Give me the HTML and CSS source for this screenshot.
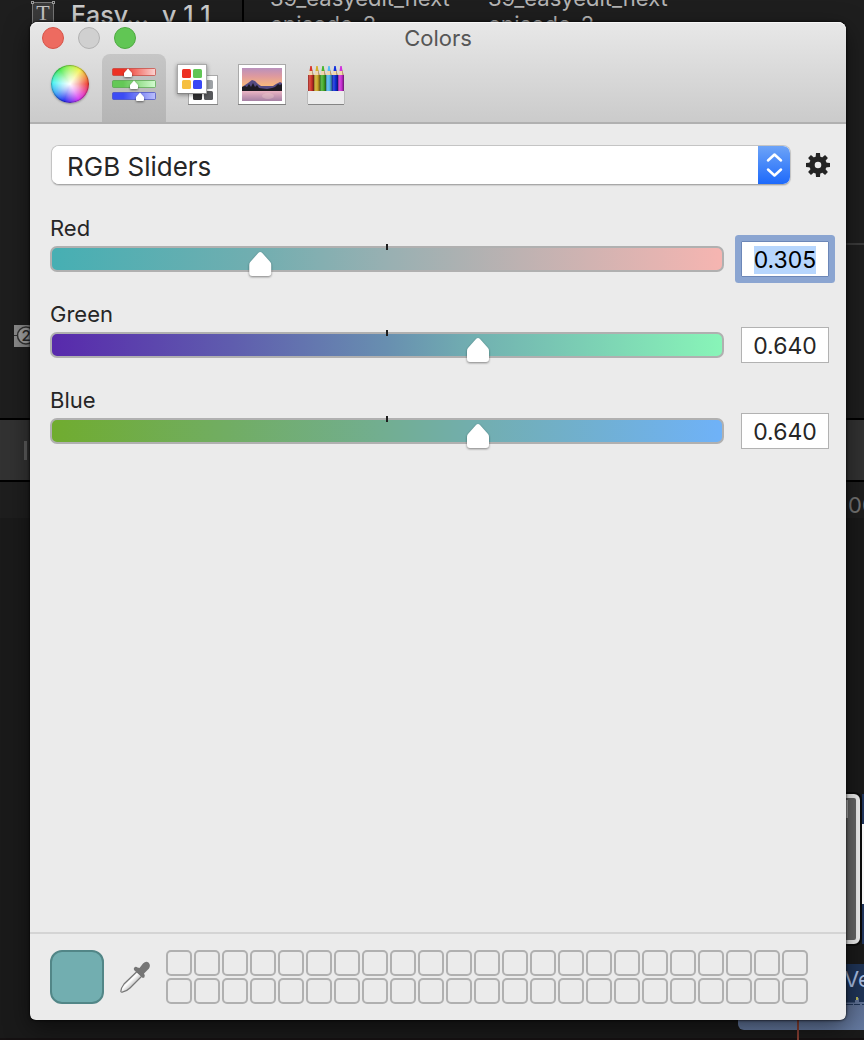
FILE: index.html
```html
<!DOCTYPE html>
<html lang="en">
<head>
<meta charset="utf-8">
<title>Colors</title>
<link rel="stylesheet" href="styles.css">
</head>
<body>
<div class="desktop">
  <div class="editor" aria-hidden="true">
    <svg class="title-icon" width="24" height="24" viewBox="0 0 24 24"><rect x="1.500" y="2.500" width="21" height="21" fill="#3a3a3a" stroke="#777"/><g fill="#1e1e1e" stroke="#999"><rect x=".5" y="1.500" width="2" height="2"/><rect x="21.500" y="1.500" width="2" height="2"/></g><text x="12" y="20" text-anchor="middle" class="title-icon-letter">T</text></svg>
    <div class="preset-name">Easy… &nbsp;v 1 1</div>
    <div class="pane-divider"></div>
    <div class="clip-name clip-name-a">39_easyedit_next<br>episode_2</div>
    <div class="clip-name clip-name-b">39_easyedit_next<br>episode_2</div>
    <div class="inspector-rule"></div>
    <svg class="badge-two" width="24" height="22" viewBox="0 0 24 22"><rect width="24" height="22" fill="#8b8b8b"/><path d="M0 10.500h24" stroke="#333"/><circle cx="12" cy="10.500" r="8.500" fill="#a0a0a0" stroke="#333" stroke-width="1.500"/><text x="12" y="16" text-anchor="middle" class="badge-digit">2</text></svg>
    <div class="timeline-bar"></div>
    <div class="timeline-grip"></div>
    <div class="timecode">00</div>
    <div class="timeline-tracks"></div>
    <div class="gap-clip"></div>
    <div class="gap-clip-mark"></div>
    <div class="next-clip"></div>
    <div class="audio-clip"><div class="audio-label">Ve</div></div>
    <svg class="waveform" width="18" height="12" viewBox="0 0 18 12"><path d="M0 9h9v-4h3v-2h1v4h5v5H0z" fill="#5e7094"/><path d="M0 9.500h7M8 9.500h6M16 9.500h2" stroke="#1f3457"/><path d="M10 2h2v3h-2z" fill="#b6b65a"/></svg>
    <div class="playhead"></div>
  </div>

  <main class="window">
    <header class="header">
      <div class="titlebar">
        <div class="lights">
          <button class="light light-close" aria-label="Close"></button>
          <button class="light light-min" aria-label="Minimize"></button>
          <button class="light light-zoom" aria-label="Zoom"></button>
        </div>
        <h1 class="title">Colors</h1>
      </div>
      <nav class="toolbar" aria-label="Color modes">
        <button class="tool" aria-label="Color Wheel"><span class="wheel"></span></button>
        <button class="tool tool-active" aria-label="Color Sliders" aria-pressed="true">
          <svg width="64" height="68" viewBox="0 0 64 68">
            <defs>
              <linearGradient id="r"><stop offset=".25" stop-color="#ed3124"/><stop offset="1" stop-color="#fbd5d3"/></linearGradient>
              <linearGradient id="g"><stop offset=".25" stop-color="#64c857"/><stop offset="1" stop-color="#d3fbd0"/></linearGradient>
              <linearGradient id="b"><stop offset=".25" stop-color="#3c4cf4"/><stop offset="1" stop-color="#bcc0fb"/></linearGradient>
            </defs>
            <rect x="10.500" y="14.500" width="43" height="7" rx="1" fill="url(#r)" stroke="#c53930" stroke-opacity=".65"/>
            <rect x="10.500" y="26.500" width="43" height="7" rx="1" fill="url(#g)" stroke="#4ca343" stroke-opacity=".65"/>
            <rect x="10.500" y="38.500" width="43" height="7" rx="1" fill="url(#b)" stroke="#3a43c4" stroke-opacity=".65"/>
            <g class="mini-thumbs" fill="#fff">
              <path d="M26 14.500l4 4.500v3q0 1-1 1h-6q-1 0-1-1v-3z"/>
              <path d="M32 26.500l4 4.500v3q0 1-1 1h-6q-1 0-1-1v-3z"/>
              <path d="M38 38.500l4 4.500v3q0 1-1 1h-6q-1 0-1-1v-3z"/>
            </g>
          </svg>
        </button>
        <button class="tool" aria-label="Color Palettes">
          <svg width="64" height="68" viewBox="0 0 64 68">
            <rect x="22.500" y="21.500" width="29" height="29" fill="#fff" stroke="#a9a9a9"/><path d="M22 50.500h30" stroke="#858585"/>
            <rect x="38" y="26" width="9" height="9" rx="1.500" fill="#9fa3a7"/><rect x="27" y="37" width="9" height="9" rx="1.500" fill="#303032"/><rect x="38" y="37" width="9" height="9" rx="1.500" fill="#58595c"/>
            <g class="card-shadow"><rect x="11.500" y="10.500" width="29" height="29" fill="#fff" stroke="#a9a9a9"/><path d="M11 39.500h30" stroke="#858585"/></g>
            <rect x="16" y="15" width="9" height="9" rx="1.500" fill="#ed3123"/><rect x="27" y="15" width="9" height="9" rx="1.500" fill="#62c655"/><rect x="16" y="26" width="9" height="9" rx="1.500" fill="#f6bf40"/><rect x="27" y="26" width="9" height="9" rx="1.500" fill="#3948f5"/>
          </svg>
        </button>
        <button class="tool" aria-label="Image Palettes">
          <svg width="64" height="68" viewBox="0 0 64 68">
            <defs>
              <linearGradient id="sky" x2="0" y2="1"><stop stop-color="#b991bd"/><stop offset=".35" stop-color="#dd999f"/><stop offset=".75" stop-color="#f6b57d"/><stop offset="1" stop-color="#fbd58e"/></linearGradient>
              <linearGradient id="lake" x2="0" y2="1"><stop stop-color="#ecb5c4"/><stop offset="1" stop-color="#a580a4"/></linearGradient>
            </defs>
            <rect x="8.500" y="10.500" width="47" height="40" fill="#fff" stroke="#a9a9a9"/><path d="M8 50.500h48" stroke="#808080"/>
            <rect x="12" y="14" width="40" height="23" fill="url(#sky)"/>
            <rect x="12" y="37" width="40" height="10" fill="url(#lake)"/>
            <path d="M12 33l3-2 3-2 4-3 3 1 3 3 3 2h12l3-2 4-2 2 1v8H12z" fill="#554b82"/>
            <path d="M12 33l3-1 2 1 2-3 2 3 2-4 2 4 2-2 2 3 8 1 5-1 3-1 3-3 2 1 2-1v7H12z" fill="#1d1a22"/>
            <ellipse cx="38" cy="42" rx="6" ry="3" fill="#f2d0cf" opacity=".35"/>
          </svg>
        </button>
        <button class="tool" aria-label="Pencils">
          <svg width="64" height="68" viewBox="0 0 64 68">
            <defs>
              <linearGradient id="round"><stop stop-color="#000" stop-opacity=".35"/><stop offset=".35" stop-color="#fff" stop-opacity=".15"/><stop offset=".6" stop-color="#000" stop-opacity=".05"/><stop offset="1" stop-color="#000" stop-opacity=".5"/></linearGradient>
              <g id="pencil"><path d="M.2 21.500L1.700 16h2.600l1.500 5.500z" fill="#f1d6ae"/><path d="M3.800 16h.5l1.500 5.500H4.500z" fill="#b08c62"/><path d="M1.500 17L2.300 12h1.400l.8 5z"/><rect y="21" width="6" height="16"/><rect y="21" width="6" height="16" fill="url(#round)"/></g>
            </defs>
            <use href="#pencil" x="14" fill="#d8352b"/><use href="#pencil" x="20" fill="#d4b02a"/><use href="#pencil" x="26" fill="#48b52c"/><use href="#pencil" x="32" fill="#54bdf5"/><use href="#pencil" x="38" fill="#0f2fe0"/><use href="#pencil" x="44" fill="#d02fdc"/>
            <rect x="13.500" y="37" width="37" height="13" fill="#ebebeb"/><path d="M13.500 37v13M50.500 37v13" stroke="#bbb"/><path d="M14 50.500h36" stroke="#858585"/>
          </svg>
        </button>
      </nav>
    </header>

    <section class="content">
      <div class="mode-row">
        <div class="mode">
          <select class="mode-select" aria-label="Slider type">
            <option>RGB Sliders</option>
            <option>Grayscale Slider</option>
            <option>CMYK Sliders</option>
            <option>HSB Sliders</option>
          </select>
          <span class="mode-arrows"><svg width="33" height="40" viewBox="0 0 33 40" fill="none" stroke="#fff" stroke-width="2.500" stroke-linecap="round" stroke-linejoin="round"><path d="M10 15.500l6.500-6 6.500 6M10 24.500l6.500 6 6.500-6"/></svg></span>
        </div>
        <button class="gear" aria-label="Options">
          <svg width="24" height="24" viewBox="-12 -12 24 24" fill="#232323">
            <defs><path id="tooth" d="M-2.400-7l.4-5h4l.4 5z"/></defs>
            <circle r="6" fill="none" stroke="#232323" stroke-width="5.400"/>
            <use href="#tooth"/><use href="#tooth" transform="rotate(45)"/><use href="#tooth" transform="rotate(90)"/><use href="#tooth" transform="rotate(135)"/><use href="#tooth" transform="rotate(180)"/><use href="#tooth" transform="rotate(225)"/><use href="#tooth" transform="rotate(270)"/><use href="#tooth" transform="rotate(315)"/>
          </svg>
        </button>
      </div>

      <div class="channels">
        <div class="channel">
          <label class="channel-label" for="red">Red</label>
          <div class="track track-red"><input class="slider" id="red" type="range" min="0" max="1" step="0.005" value="0.305"></div>
          <input class="field" id="red-value" type="text" value="0.305" aria-label="Red value">
        </div>
        <div class="channel">
          <label class="channel-label" for="green">Green</label>
          <div class="track track-green"><input class="slider" id="green" type="range" min="0" max="1" step="0.005" value="0.64"></div>
          <input class="field" type="text" value="0.640" aria-label="Green value">
        </div>
        <div class="channel">
          <label class="channel-label" for="blue">Blue</label>
          <div class="track track-blue"><input class="slider" id="blue" type="range" min="0" max="1" step="0.005" value="0.64"></div>
          <input class="field" type="text" value="0.640" aria-label="Blue value">
        </div>
      </div>
    </section>

    <footer class="footer">
      <button class="current" aria-label="Current color"></button>
      <button class="dropper" aria-label="Pick color from screen">
        <svg width="30" height="32" viewBox="0 0 30 32">
          <defs><linearGradient id="glass" x1="0" y1="0" x2="1" y2="1"><stop offset=".25" stop-color="#c2c2c2"/><stop offset=".45" stop-color="#fff"/><stop offset=".7" stop-color="#aaa"/></linearGradient></defs>
          <path d="M17 10.500L4 23Q1 27 .8 30.400q.4 1 1.400.8Q7 30 10 27L22 15z" fill="url(#glass)" stroke="#777" stroke-width="1.200"/>
          <path d="M14 7q1.500-2 3.500-.5l2 .5 3.500-4.500q3-3 5.500-1Q31 4 29 7.500l-5 5 .8 2q0 2.500-2 2.500L14.500 9.500Q13.500 8.500 14 7z" fill="#757575"/>
        </svg>
      </button>
      <div class="cells" id="cells"></div>
    </footer>
  </main>
</div>
<script src="script.js"></script>
</body>
</html>
```
FILE: styles.css
```css
* { box-sizing: border-box; }

body {
  margin: 0;
  background: #1e1e1e;
  color: #262626;
  font: 22px/28px Inter, "Liberation Sans", sans-serif;
}

button {
  padding: 0;
  border: 0;
  background: none;
}

svg { display: block; }

.desktop {
  position: relative;
  display: flex;
  min-height: 100vh;
  padding: 22px 18px 20px 30px;
  overflow: hidden;
}

/* Video editor seen behind the panel */
.editor,
.editor > * { position: absolute; }
.editor { inset: 0; overflow: hidden; }

.title-icon { left: 31px; top: 0; }
.title-icon-letter { font: 22px "Liberation Serif", serif; fill: #c4c4c4; }
.preset-name { left: 71px; top: 1px; font-size: 25px; font-weight: 500; color: #cbcbcb; white-space: nowrap; }
.pane-divider { left: 242px; top: 0; width: 2px; height: 22px; background: #000; }
.clip-name { top: -15px; line-height: 26px; color: #b4b4b4; }
.clip-name-a { left: 270px; }
.clip-name-b { left: 488px; }
.inspector-rule { right: 0; top: 243px; width: 18px; height: 2px; background: #3b3b3b; }
.badge-two { left: 14px; top: 325px; }
.badge-digit { font: 500 15px Inter, sans-serif; fill: #2a2a2a; }
.timeline-bar { left: 0; right: 0; top: 418px; height: 64px; background: #323232; border: solid #000; border-width: 2px 0; }
.timeline-grip { left: 24px; top: 441px; width: 3px; height: 19px; background: #5c5c5c; }
.timecode { left: calc(100% - 16px); top: 491px; color: #747474; }
.timeline-tracks { left: 0; right: 0; top: 518px; bottom: 0; background: #1a1a1a; border-bottom: 2px solid #151112; }
.gap-clip { right: 4px; top: 794px; width: 60px; height: 150px; background: #666; border: 4px solid #f0f0f0; border-radius: 6px; box-shadow: 0 0 0 2px #0c0c0c; }
.gap-clip-mark { right: 16px; top: 800px; width: 2px; height: 18px; background: #b4b4b4; }
.next-clip { right: 0; top: 824px; width: 2px; height: 80px; background: #fff; box-shadow: 0 -30px #22375f, 0 40px #22375f; }
.audio-clip { right: 0; top: 964px; width: 126px; height: 66px; padding-left: 106px; background: linear-gradient(#1f3457 38px, #5e7094 39px, #64799f); border-radius: 0 0 0 6px; overflow: hidden; }
.audio-label { padding-top: 1px; color: #a9bfe4; }
.waveform { right: 0; top: 995px; }
.playhead { right: 65px; bottom: 0; width: 2px; height: 20px; background: #853e32; }

/* Panel */
.window {
  position: relative;
  display: flex;
  flex: 1;
  flex-direction: column;
  min-width: 0;
  background: #ebebeb;
  border-radius: 8px 8px 6px 6px;
  box-shadow: 0 0 3px #000, 0 8px 24px rgba(0, 0, 0, .5);
}

.header {
  background: linear-gradient(#e8e8e8, #cbcbcb);
  border-bottom: 2px solid #b0b0b0;
  border-radius: 8px 8px 0 0;
  box-shadow: inset 0 1px #f6f6f6;
}

.titlebar {
  display: grid;
  grid-template-columns: 1fr auto 1fr;
  align-items: center;
  height: 32px;
  padding: 0 12px;
}
.lights { display: flex; gap: 14px; }
.light { width: 22px; height: 22px; border: 1px solid; border-radius: 50%; }
.light-close { background: #ed6b60; border-color: #d75449; }
.light-min { background: #d0d0d0; border-color: #b2b2b2; }
.light-zoom { background: #61c654; border-color: #4eaa41; }
.title { margin: 0; font-size: 22px; font-weight: 400; color: #565656; }

.toolbar { display: flex; padding-left: 8px; }
.tool { width: 64px; height: 68px; border-radius: 8px 8px 0 0; }
.tool-active { background: linear-gradient(#c6c6c6, #b5b5b5); }
.wheel {
  display: block;
  width: 38px;
  height: 38px;
  margin: 0 auto 8px;
  border-radius: 50%;
  background:
    radial-gradient(circle, #fff, rgba(255, 255, 255, .6) 30%, rgba(255, 255, 255, 0) 68%),
    conic-gradient(#a6f552, #f3f046 35deg, #ef3b30 90deg, #e637b6 125deg, #d436f2 150deg, #1f2bf0 200deg, #37a6f6 240deg, #45f5f2 275deg, #46e94b 325deg, #a6f552);
  box-shadow: inset 0 0 1px 1px rgba(0, 0, 0, .3), 0 1px 2px rgba(0, 0, 0, .3);
}
.mini-thumbs { filter: drop-shadow(0 1px 1px rgba(0, 0, 0, .5)); }
.card-shadow { filter: drop-shadow(0 1px 2px rgba(0, 0, 0, .4)); }

.content { flex: 1; padding: 21px 16px 20px 20px; }

.mode-row { display: flex; align-items: center; gap: 15px; padding-left: 1px; }
.mode {
  position: relative;
  flex: 1;
  height: 40px;
  border-radius: 8px;
  overflow: hidden;
  border: 1px solid #c4c4c4;
  border-bottom-color: #a8a8a8;
  background: #fff;
  box-shadow: 0 1px 1px rgba(0, 0, 0, .12);
}
.mode-select {
  width: 100%;
  height: 100%;
  padding: 3px 40px 0 15px;
  border: 0;
  outline: 0;
  appearance: none;
  background: #fff;
  color: #262626;
  font: 26px/32px Inter, "Liberation Sans", sans-serif;
}
.mode-arrows {
  position: absolute;
  inset: -1px -1px -1px auto;
  background: linear-gradient(#6fa5f7, #1b68fb);
  pointer-events: none;
}
.gear { width: 24px; height: 24px; }

.channels { display: grid; gap: 22px; margin-top: 28px; padding-right: 1px; }
.channel {
  display: grid;
  grid-template-columns: 1fr 88px;
  grid-template-rows: 28px 36px;
  column-gap: 17px;
}
.channel-label { grid-column: 1 / -1; padding-top: 1px; }

.track {
  position: relative;
  height: 26px;
  margin-top: 5px;
  border: 2px solid #b0b0b0;
  border-radius: 7px;
}
.track::before {
  content: "";
  position: absolute;
  top: -4px;
  left: 50%;
  width: 2px;
  height: 6px;
  margin-left: -1px;
  background: #1e1e1e;
}
.track-red { background: linear-gradient(90deg, #46afb3, #72aeb0 31%, #98b0b2 50%, #f6b5b1); }
.track-green { background: linear-gradient(90deg, #5829ac, #5f5dae 27%, #688fb0 50%, #72b2b1 64%, #88f5b8); }
.track-blue { background: linear-gradient(90deg, #70ac2f, #72ae92 50%, #72aeb0 64%, #6fb2f8); }

.slider {
  display: block;
  position: relative;
  width: calc(100% + 4px);
  height: 24px;
  margin: 4px -2px 0;
  appearance: none;
  background: none;
  filter: drop-shadow(0 1px 1px rgba(0, 0, 0, .45));
}
.slider::-webkit-slider-thumb {
  appearance: none;
  width: 24px;
  height: 24px;
  background: #fff;
  clip-path: path("M12 0 Q13 0 14 1 L22 10 Q23 11 23 13 L23 21 Q23 24 20 24 L4 24 Q1 24 1 21 L1 13 Q1 11 2 10 L10 1 Q11 0 12 0 Z");
}

.field {
  width: 88px;
  height: 36px;
  padding: 2px 4px 0;
  border: 1px solid #b2b2b2;
  border-radius: 0;
  outline: 0;
  background: #fff;
  color: #262626;
  font: 23px/28px Inter, "Liberation Sans", sans-serif;
  text-align: center;
}
.field:focus {
  border-color: #6c87b8;
  color: #000;
  box-shadow: 0 0 0 6px #8ba5d1;
  border-radius: 1px;
}
.field::selection { background: #b7d6fd; color: #000; }

.footer {
  display: flex;
  align-items: center;
  gap: 16px;
  padding: 16px 20px;
  border-top: 2px solid #d4d4d4;
}
.current {
  width: 54px;
  height: 54px;
  border: 2px solid #528687;
  border-radius: 12px;
  background: #72aeb0;
}
.cells { display: grid; grid-template-columns: repeat(23, 26px); gap: 2px; }
.cell { height: 26px; border: 2px solid #b0b0b0; border-radius: 5px; }
```
FILE: script.js
```js
const cells = document.getElementById("cells");
for (let i = 1; i <= 46; i++) {
  const cell = document.createElement("button");
  cell.className = "cell";
  cell.setAttribute("aria-label", "Saved color " + i);
  cells.append(cell);
}

const redValue = document.getElementById("red-value");
redValue.focus();
redValue.select();
```
